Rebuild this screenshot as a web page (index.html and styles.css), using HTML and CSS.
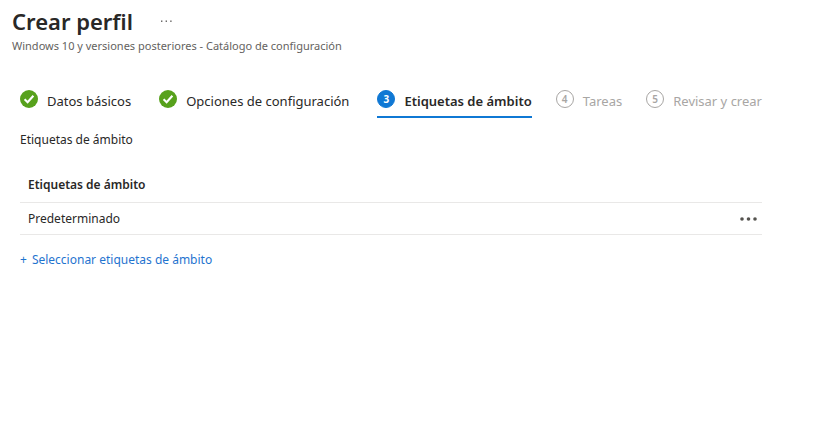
FILE: index.html
```html
<!DOCTYPE html>
<html lang="es">
<head>
<meta charset="utf-8">
<meta name="viewport" content="width=device-width, initial-scale=1">
<title>Crear perfil</title>
<link rel="stylesheet" href="styles.css">
</head>
<body>
<header class="page-header">
  <div class="title-row">
    <h1 class="title">Crear perfil</h1>
    <button class="icon-button" type="button" aria-label="Más opciones">
      <svg width="12" height="2" viewBox="0 0 12 2" fill="#605e5c"><rect x="0" y=".5" width="1.4" height="1.4"/><rect x="4.600" y=".5" width="1.4" height="1.4"/><rect x="9.200" y=".5" width="1.4" height="1.4"/></svg>
    </button>
  </div>
  <p class="subtitle">Windows 10 y versiones posteriores - Catálogo de configuración</p>
</header>
<main class="content">
  <nav class="steps" aria-label="Pasos">
    <a class="step done" href="#datos">
      <svg class="badge" viewBox="0 0 18 18"><circle cx="9" cy="9" r="9" fill="#57a11c"/><path d="M4.600 9.3 7.600 12.2 13.4 5.7" fill="none" stroke="#fff" stroke-width="2.1"/></svg>
      <span>Datos básicos</span>
    </a>
    <a class="step done" href="#opciones">
      <svg class="badge" viewBox="0 0 18 18"><circle cx="9" cy="9" r="9" fill="#57a11c"/><path d="M4.600 9.3 7.600 12.2 13.4 5.7" fill="none" stroke="#fff" stroke-width="2.1"/></svg>
      <span>Opciones de configuración</span>
    </a>
    <a class="step current" href="#etiquetas" aria-current="step">
      <span class="badge number">3</span>
      <span>Etiquetas de ámbito</span>
    </a>
    <a class="step pending" href="#tareas">
      <span class="badge number">4</span>
      <span>Tareas</span>
    </a>
    <a class="step pending" href="#revisar">
      <span class="badge number">5</span>
      <span>Revisar y crear</span>
    </a>
  </nav>
  <h2 class="section-title">Etiquetas de ámbito</h2>
  <table class="tags">
    <thead>
      <tr><th scope="col" colspan="2">Etiquetas de ámbito</th></tr>
    </thead>
    <tbody>
      <tr>
        <td>Predeterminado</td>
        <td class="actions">
          <button class="icon-button" type="button" aria-label="Acciones">
            <svg width="18" height="4" viewBox="0 0 18 4" fill="#55534f"><circle cx="2" cy="2" r="1.8"/><circle cx="8.500" cy="2" r="1.8"/><circle cx="15" cy="2" r="1.8"/></svg>
          </button>
        </td>
      </tr>
    </tbody>
  </table>
  <a class="add-link" href="#seleccionar"><span>+</span><span>Seleccionar etiquetas de ámbito</span></a>
</main>
</body>
</html>
```
FILE: styles.css
```css
* {
  box-sizing: border-box;
}

body {
  margin: 0;
  background: #fff;
  color: #292827;
  font: 12px/18px "Noto Sans", "Open Sans", sans-serif;
}

a {
  color: inherit;
  text-decoration: none;
}

.icon-button {
  display: inline-flex;
  padding: 0;
  border: 0;
  background: none;
}

.page-header {
  padding: 5px 12px 0;
}

.title-row {
  display: flex;
  align-items: center;
  gap: 28px;
}

.title {
  margin: 0;
  font-size: 22px;
  font-weight: 600;
  line-height: 32px;
}

.subtitle {
  margin: 0;
  color: #646260;
  font-size: 11px;
  line-height: 18px;
}

.content {
  padding: 31px 70px 0 20px;
}

.steps {
  display: flex;
  justify-content: space-between;
  font-size: 13px;
  white-space: nowrap;
}

.step {
  display: flex;
  gap: 9px;
  height: 32px;
  padding-top: 4px;
  border-bottom: 2px solid transparent;
  line-height: 22px;
}

.done {
  margin-right: 4px;
}

.badge {
  flex: none;
  width: 18px;
  height: 18px;
}

.number {
  border: 1px solid #a8a6a4;
  border-radius: 50%;
  font-size: 10px;
  font-weight: 600;
  line-height: 16px;
  text-align: center;
}

.current {
  border-bottom-color: #0f78d4;
  font-weight: 600;
}

.current .number {
  border-color: #0f78d4;
  background: #0f78d4;
  color: #fff;
  font-weight: 700;
}

.pending {
  color: #a8a6a4;
}

.section-title {
  margin: 12px 0 18px;
  font-size: 12px;
  font-weight: 400;
  line-height: 20px;
}

.tags {
  width: 100%;
  border-collapse: collapse;
}

.tags th,
.tags td {
  height: 32px;
  padding: 2px 8px 0;
  border-bottom: 1px solid #e9e8e7;
  text-align: left;
}

.tags th {
  height: 34px;
  padding-top: 0;
  font-weight: 600;
}

.tags .actions {
  padding: 0 4px 0 8px;
  text-align: right;
}

.actions .icon-button {
  vertical-align: middle;
}

.add-link {
  display: inline-flex;
  gap: 5px;
  margin-top: 16px;
  color: #1f74cf;
}
```
